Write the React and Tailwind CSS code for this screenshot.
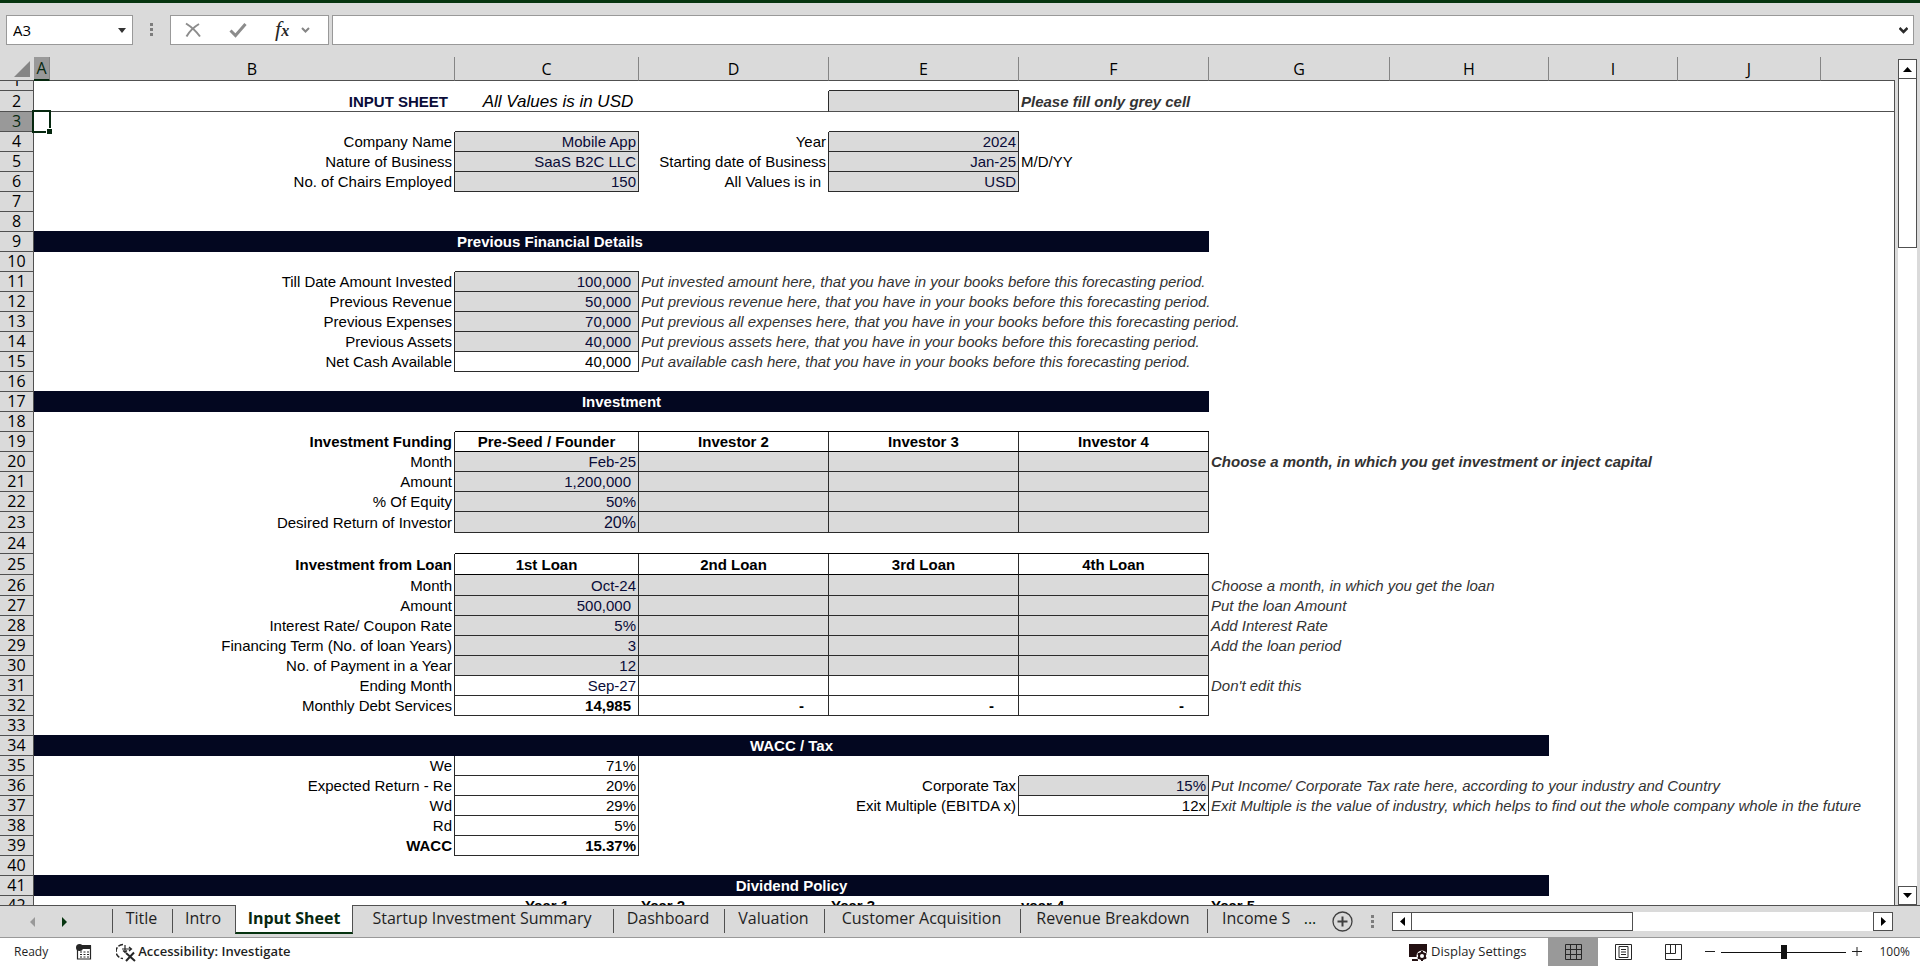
import React, { useState } from 'react'
import clsx from 'clsx'

const COLS = ['A', 'B', 'C', 'D', 'E', 'F', 'G', 'H', 'I', 'J', '']

// I = input cell (grey), O = output cell (white), H = table heading; all three are boxed
const ROWS = [
  { n: 1, short: true },
  {
    n: 2,
    tall: true,
    B: { t: 'INPUT SHEET', k: 'label', bold: true, indent: true, navy: true },
    C: { t: 'All Values is in USD', k: 'center', italic: true, title: true },
    E: { k: 'I' },
    F: { t: 'Please fill only grey cell', k: 'note', bold: true },
  },
  { n: 3 },
  { n: 4, B: { t: 'Company Name' }, C: { t: 'Mobile App', k: 'I' }, D: { t: 'Year' }, E: { t: '2024', k: 'I' } },
  {
    n: 5,
    B: { t: 'Nature of Business' },
    C: { t: 'SaaS B2C LLC', k: 'I' },
    D: { t: 'Starting date of Business' },
    E: { t: 'Jan-25', k: 'I' },
    F: { t: 'M/D/YY', k: 'left' },
  },
  {
    n: 6,
    B: { t: 'No. of Chairs Employed' },
    C: { t: '150', k: 'I' },
    D: { t: 'All Values is in', indent: true },
    E: { t: 'USD', k: 'I' },
  },
  { n: 7 },
  { n: 8 },
  { n: 9, band: 'Previous Financial Details', span: 6, bandLeft: true },
  { n: 10 },
  {
    n: 11,
    B: { t: 'Till Date Amount Invested' },
    C: { t: '100,000', k: 'I', indent: true },
    D: { t: 'Put invested amount here, that you have in your books before this forecasting period.', k: 'note' },
  },
  {
    n: 12,
    B: { t: 'Previous Revenue' },
    C: { t: '50,000', k: 'I', indent: true },
    D: { t: 'Put previous revenue here, that you have in your books before this forecasting period.', k: 'note' },
  },
  {
    n: 13,
    B: { t: 'Previous Expenses' },
    C: { t: '70,000', k: 'I', indent: true },
    D: { t: 'Put previous all expenses here, that you have in your books before this forecasting period.', k: 'note' },
  },
  {
    n: 14,
    B: { t: 'Previous Assets' },
    C: { t: '40,000', k: 'I', indent: true },
    D: { t: 'Put previous assets here, that you have in your books before this forecasting period.', k: 'note' },
  },
  {
    n: 15,
    B: { t: 'Net Cash Available' },
    C: { t: '40,000', k: 'O', indent: true },
    D: { t: 'Put available cash here, that you have in your books before this forecasting period.', k: 'note' },
  },
  { n: 16 },
  { n: 17, band: 'Investment', span: 6 },
  { n: 18 },
  {
    n: 19,
    B: { t: 'Investment Funding', bold: true },
    C: { t: 'Pre-Seed / Founder', k: 'H' },
    D: { t: 'Investor 2', k: 'H' },
    E: { t: 'Investor 3', k: 'H' },
    F: { t: 'Investor 4', k: 'H' },
  },
  {
    n: 20,
    B: { t: 'Month' },
    C: { t: 'Feb-25', k: 'I' },
    D: { k: 'I' },
    E: { k: 'I' },
    F: { k: 'I' },
    G: { t: 'Choose a month, in which you get investment or inject capital', k: 'note', bold: true },
  },
  { n: 21, B: { t: 'Amount' }, C: { t: '1,200,000', k: 'I', indent: true }, D: { k: 'I' }, E: { k: 'I' }, F: { k: 'I' } },
  { n: 22, B: { t: '% Of Equity' }, C: { t: '50%', k: 'I' }, D: { k: 'I' }, E: { k: 'I' }, F: { k: 'I' } },
  {
    n: 23,
    tall: true,
    B: { t: 'Desired Return of Investor' },
    C: { t: '20%', k: 'I', big: true },
    D: { k: 'I' },
    E: { k: 'I' },
    F: { k: 'I' },
  },
  { n: 24, tall: true },
  {
    n: 25,
    tall: true,
    B: { t: 'Investment from Loan', bold: true },
    C: { t: '1st Loan', k: 'H' },
    D: { t: '2nd Loan', k: 'H' },
    E: { t: '3rd Loan', k: 'H' },
    F: { t: '4th Loan', k: 'H' },
  },
  {
    n: 26,
    tall: true,
    B: { t: 'Month' },
    C: { t: 'Oct-24', k: 'I' },
    D: { k: 'I' },
    E: { k: 'I' },
    F: { k: 'I' },
    G: { t: 'Choose a month, in which you get the loan', k: 'note' },
  },
  {
    n: 27,
    B: { t: 'Amount' },
    C: { t: '500,000', k: 'I', indent: true },
    D: { k: 'I' },
    E: { k: 'I' },
    F: { k: 'I' },
    G: { t: 'Put the loan Amount', k: 'note' },
  },
  {
    n: 28,
    B: { t: 'Interest Rate/ Coupon Rate' },
    C: { t: '5%', k: 'I' },
    D: { k: 'I' },
    E: { k: 'I' },
    F: { k: 'I' },
    G: { t: 'Add Interest Rate', k: 'note' },
  },
  {
    n: 29,
    B: { t: 'Financing Term (No. of loan Years)' },
    C: { t: '3', k: 'I' },
    D: { k: 'I' },
    E: { k: 'I' },
    F: { k: 'I' },
    G: { t: 'Add the loan period', k: 'note' },
  },
  { n: 30, B: { t: 'No. of Payment in a Year' }, C: { t: '12', k: 'I' }, D: { k: 'I' }, E: { k: 'I' }, F: { k: 'I' } },
  {
    n: 31,
    B: { t: 'Ending Month' },
    C: { t: 'Sep-27', k: 'O', navy: true },
    D: { k: 'O' },
    E: { k: 'O' },
    F: { k: 'O' },
    G: { t: "Don't edit this", k: 'note' },
  },
  {
    n: 32,
    B: { t: 'Monthly Debt Services' },
    C: { t: '14,985', k: 'O', bold: true, indent: true },
    D: { t: '-', k: 'O', bold: true, dash: true },
    E: { t: '-', k: 'O', bold: true, dash: true },
    F: { t: '-', k: 'O', bold: true, dash: true },
  },
  { n: 33 },
  { n: 34, band: 'WACC / Tax', span: 8 },
  { n: 35, B: { t: 'We' }, C: { t: '71%', k: 'O' } },
  {
    n: 36,
    B: { t: 'Expected Return - Re' },
    C: { t: '20%', k: 'O' },
    E: { t: 'Corporate Tax' },
    F: { t: '15%', k: 'I' },
    G: { t: 'Put Income/ Corporate Tax rate here, according to your industry and Country', k: 'note' },
  },
  {
    n: 37,
    B: { t: 'Wd' },
    C: { t: '29%', k: 'O' },
    E: { t: 'Exit Multiple (EBITDA x)' },
    F: { t: '12x', k: 'O' },
    G: { t: 'Exit Multiple is the value of industry, which helps to find out the whole company whole in the future', k: 'note' },
  },
  { n: 38, B: { t: 'Rd' }, C: { t: '5%', k: 'O' } },
  { n: 39, B: { t: 'WACC', bold: true }, C: { t: '15.37%', k: 'O', bold: true } },
  { n: 40 },
  { n: 41, band: 'Dividend Policy', span: 8 },
  {
    n: 42,
    C: { t: 'Year 1', k: 'center', bold: true },
    D: { t: 'Year 2', k: 'left', bold: true },
    E: { t: 'Year 3', k: 'left', bold: true },
    F: { t: 'year 4', k: 'left', bold: true },
    G: { t: 'Year 5', k: 'left', bold: true },
  },
]

const TABS = [
  { name: 'Title', width: 'w-15' },
  { name: 'Intro', width: 'w-[63px]' },
  { name: 'Input Sheet', width: 'w-[118px]' },
  { name: 'Startup Investment Summary', width: 'w-[260px]' },
  { name: 'Dashboard', width: 'w-[111px]' },
  { name: 'Valuation', width: 'w-[100px]' },
  { name: 'Customer Acquisition', width: 'w-[196px]' },
  { name: 'Revenue Breakdown', width: 'w-[187px]' },
]

const isBox = (row, col) => Boolean(row && col && row[col] && ['I', 'O', 'H'].includes(row[col].k))
const inBand = (row, i) => Boolean(row && row.band && i < row.span)

const Cell = ({ row, next, i }) => {
  const col = COLS[i]
  const cell = row[col] || {}
  const { t, k = 'label' } = cell
  const last = i === COLS.length - 1
  const boxed = isBox(row, col)
  const rightAligned = k === 'label' || k === 'I' || k === 'O'

  // each cell draws only its right and bottom lines, so neighbours are looked up
  const right = last || boxed || isBox(row, COLS[i + 1])
  const bottom = boxed || isBox(next, col) || inBand(next, i) || row.n === 2
  const heading = k === 'H' || next?.[col]?.k === 'H'

  return (
    <td
      className={clsx(
        'p-0 align-bottom whitespace-nowrap',
        row.n === 3 && col === 'A' && 'relative',
        k === 'I' && 'bg-[#dadada]',
        right && 'border-r',
        right && (last ? 'border-r-[#505050]' : 'border-r-[#2b2b2b]'),
        bottom ? 'border-b' : 'pb-px',
        row.n === 2
          ? 'border-b-[#505050]'
          : inBand(next, i)
            ? 'border-b-[#030720]'
            : heading ? 'border-b-black' : 'border-b-[#2b2b2b]'
      )}
    >
      {t && (
        <div
          className={clsx(
            'h-[19px]',
            cell.title ? 'pl-[22px] text-[17px] leading-[19px]' : cell.big ? 'text-base leading-[19px]' : 'text-[15px] leading-[19px]',
            rightAligned && 'text-right',
            rightAligned && (cell.dash ? 'pr-6' : cell.indent ? 'pr-[7px]' : 'pr-0.5'),
            (k === 'H' || k === 'center') && 'text-center',
            (k === 'note' || k === 'left') && 'pl-0.5',
            (k === 'note' || cell.italic) && 'italic',
            (k === 'H' || cell.bold) && 'font-bold',
            k === 'note' ? 'text-[#333333]' : k === 'I' || cell.navy ? 'text-[#0a0c38]' : 'text-black'
          )}
        >
          {t}
        </div>
      )}
      {row.n === 3 && col === 'A' && (
        <div className="absolute -top-0.5 -left-0.5 w-[19px] h-[23px] border-2 border-[#06280f] pointer-events-none">
          <span className="absolute -right-[3px] -bottom-[3px] w-[6px] h-[6px] bg-[#06280f] border-t border-l border-white" />
        </div>
      )}
    </td>
  )
}

const Row = ({ row, next }) => {
  const start = row.band ? row.span : 0
  return (
    <tr className={row.short ? 'h-2.5' : row.tall ? 'h-[21px]' : 'h-5'}>
      <th
        scope="row"
        className={clsx(
          "border-r border-b border-[#505050] p-0 align-bottom font-normal font-['Open_Sans',sans-serif] text-base",
          row.n === 3 ? 'bg-[#999999] text-[#06280f]' : 'bg-[#dadada] text-black'
        )}
      >
        <div className={clsx('flex items-end justify-center leading-[19px]', row.short ? 'h-[9px] overflow-hidden' : 'h-[19px]')}>
          {row.n}
        </div>
      </th>
      {row.band && !row.bandLeft && (
        <td colSpan={row.span} className="bg-[#030720] p-0 pb-px align-bottom text-center text-[15px] leading-[19px] font-bold text-white">
          {row.band}
        </td>
      )}
      {row.bandLeft && (
        <>
          <td colSpan={2} className="bg-[#030720] p-0" />
          <td colSpan={4} className="bg-[#030720] p-0 pb-px pl-0.5 align-bottom text-[15px] leading-[19px] font-bold text-white">
            {row.band}
          </td>
        </>
      )}
      {COLS.map((col, i) => i >= start && <Cell key={i} row={row} next={next} i={i} />)}
    </tr>
  )
}

const Sheet = () => (
  <table className="w-full table-fixed border-separate border-spacing-0 font-['Liberation_Sans',Arial,sans-serif]">
    <colgroup>
      <col className="w-[34px]" />
      <col className="w-4" />
      <col className="w-[405px]" />
      <col className="w-[184px]" />
      <col className="w-[190px]" />
      <col className="w-[190px]" />
      <col className="w-[190px]" />
      <col className="w-[181px]" />
      <col className="w-[159px]" />
      <col className="w-[129px]" />
      <col className="w-[143px]" />
      <col />
    </colgroup>
    <thead>
      <tr className="h-6 font-['Open_Sans',sans-serif] text-base">
        <th className="p-0 border-b border-[#505050]">
          <button aria-label="Select all" className="flex w-full h-[23px] items-end justify-end pr-1 pb-[3px]">
            <svg width="16" height="16" viewBox="0 0 16 16">
              <path d="M16 0V16H0Z" fill="#858585" />
            </svg>
          </button>
        </th>
        {COLS.map((col, i) => (
          <th
            key={i}
            scope="col"
            className={clsx(
              'p-0 font-normal leading-[22px]',
              col === 'A' ? 'bg-[#999999] border-b-2 border-b-[#06280f] text-[#06280f]' : 'border-b border-b-[#505050]',
              col !== '' && 'border-r border-r-[#858585]'
            )}
          >
            {col}
          </th>
        ))}
      </tr>
    </thead>
    <tbody className="bg-white">
      {ROWS.map((row, i) => (
        <Row key={row.n} row={row} next={ROWS[i + 1]} />
      ))}
    </tbody>
  </table>
)

const Grip = () => (
  <svg width="4" height="14" viewBox="0 0 4 14" fill="#7d7d7d">
    <path d="M0 0H3V3H0ZM0 5H3V8H0ZM0 10H3V13H0Z" />
  </svg>
)

const FormulaBar = () => (
  <div className="flex h-[54px] items-start pt-3 pl-1.5 pr-1.5 font-['Open_Sans',sans-serif]">
    <div className="flex w-[127px] h-[30px] items-center bg-white border border-[#999999] pr-1.5">
      <input aria-label="Name box" defaultValue="A3" className="min-w-0 flex-1 pl-1.5 text-[15px] text-black outline-none" />
      <button aria-label="Open name list">
        <svg width="8" height="5" viewBox="0 0 8 5">
          <path d="M0 0H8L4 5Z" fill="#333" />
        </svg>
      </button>
    </div>
    <div className="flex w-[37px] h-[30px] items-center justify-center">
      <Grip />
    </div>
    <div className="flex w-[159px] h-[30px] items-center bg-white border border-[#999999] pl-[13px]">
      <button aria-label="Cancel">
        <svg width="18" height="16" viewBox="0 0 18 16" fill="none" stroke="#8c8c8c" strokeWidth="2">
          <path d="M2 1.500C6 4 12 9 16 14.500M15 2C10 5 5 10 2.500 14.500" />
        </svg>
      </button>
      <button aria-label="Enter" className="ml-[27px]">
        <svg width="18" height="16" viewBox="0 0 18 16" fill="none" stroke="#8c8c8c" strokeWidth="3">
          <path d="M1.500 8.500L6.500 13.500L16.500 2" />
        </svg>
      </button>
      <button aria-label="Insert function" className="ml-7 font-['Liberation_Serif',serif] italic text-[22px] leading-6 text-[#262626]">
        f<span className="text-base font-bold">x</span>
      </button>
      <button aria-label="More functions" className="ml-3">
        <svg width="9" height="6" viewBox="0 0 9 6" fill="none" stroke="#858585" strokeWidth="2">
          <path d="M1 1L4.500 4.500L8 1" />
        </svg>
      </button>
    </div>
    <div className="ml-[3px] flex flex-1 h-[30px] items-center bg-white border border-[#999999] pr-[5px]">
      <input aria-label="Formula bar" className="min-w-0 flex-1 h-full px-2 text-sm outline-none" />
      <button aria-label="Expand formula bar">
        <svg width="9" height="7" viewBox="0 0 9 7" fill="none" stroke="#2b2b2b" strokeWidth="2.500">
          <path d="M0.500 1L4.500 5L8.500 1" />
        </svg>
      </button>
    </div>
  </div>
)

const VerticalScroll = () => (
  <div className="flex w-[25px] shrink-0 flex-col pt-0.5 pl-[3px] pr-[3px]">
    <button aria-label="Scroll up" className="flex h-5 shrink-0 items-center justify-center bg-white border border-[#505050]">
      <svg width="9" height="5" viewBox="0 0 9 5"><path d="M4.500 0L9 5H0Z" /></svg>
    </button>
    <div className="flex-1 bg-white">
      <div className="-mt-px h-[170px] bg-white border border-[#505050]" />
    </div>
    <button aria-label="Scroll down" className="flex h-[19px] shrink-0 items-center justify-center bg-white border border-[#505050]">
      <svg width="9" height="5" viewBox="0 0 9 5"><path d="M0 0H9L4.500 5Z" /></svg>
    </button>
  </div>
)

const TabBar = () => {
  const [active, setActive] = useState('Input Sheet')
  return (
    <div className="flex h-[33px] shrink-0 border-t border-t-[#505050] border-b border-b-[#999999] pr-[27px] font-['Open_Sans',sans-serif] text-base">
      <div className="flex w-28 shrink-0 items-center pl-[30px] gap-[27px]">
        <button aria-label="Previous sheet">
          <svg width="5" height="10" viewBox="0 0 5 10"><path d="M5 0V10L0 5Z" fill="#999" /></svg>
        </button>
        <button aria-label="Next sheet">
          <svg width="5" height="10" viewBox="0 0 5 10"><path d="M0 0V10L5 5Z" fill="#06340f" /></svg>
        </button>
      </div>
      <div className="flex shrink-0 items-start" role="tablist">
        {TABS.map(({ name, width }, i) => {
          const selected = name === active
          const afterSelected = i > 0 && TABS[i - 1].name === active
          return (
            <button
              key={name}
              role="tab"
              aria-selected={selected}
              onClick={() => setActive(name)}
              className={clsx(
                'flex shrink-0 items-start justify-center whitespace-nowrap',
                width,
                selected
                  ? '-mt-px h-[29px] bg-white border-x border-x-[#505050] border-b-2 border-b-[#06340f] font-bold text-[#06280f] leading-[26px]'
                  : 'mt-[3px] h-6 pr-0.5 leading-[18px] text-[#1f1f1f]',
                !selected && !afterSelected && 'border-l border-l-[#505050]'
              )}
            >
              {name}
            </button>
          )
        })}
        <button role="tab" aria-selected={false} className="flex mt-[3px] h-6 w-[89px] items-start border-l border-l-[#505050] pl-3.5 leading-[18px] whitespace-nowrap text-[#1f1f1f]">
          Income S
        </button>
      </div>
      <button aria-label="More sheets" className="w-7 pb-2 text-[#06280f]">...</button>
      <button aria-label="New sheet" className="ml-2">
        <svg width="21" height="21" viewBox="0 0 21 21" fill="none" stroke="#404040">
          <circle cx="10.500" cy="10.500" r="9.500" strokeWidth="1.300" />
          <path d="M10.500 5.500V15.500M5.500 10.500H15.500" strokeWidth="2" />
        </svg>
      </button>
      <div className="flex w-[39px] shrink-0 items-center justify-center">
        <Grip />
      </div>
      <div className="mt-1.5 flex h-[19px] flex-1 bg-white">
        <button aria-label="Scroll left" className="flex w-5 items-center justify-center bg-white border border-[#505050]">
          <svg width="5" height="9" viewBox="0 0 5 9"><path d="M5 0V9L0 4.500Z" /></svg>
        </button>
        <div className="flex-1">
          <div className="-ml-px h-full w-[222px] bg-white border border-[#505050]" />
        </div>
        <button aria-label="Scroll right" className="flex w-5 items-center justify-center bg-white border border-[#505050]">
          <svg width="5" height="9" viewBox="0 0 5 9"><path d="M0 0V9L5 4.500Z" /></svg>
        </button>
      </div>
    </div>
  )
}

const StatusBar = () => (
  <div className="flex h-7 shrink-0 items-center bg-white pl-3.5 pr-2.5 font-['Open_Sans',sans-serif] text-xs text-[#1f1f1f]">
    <span>Ready</span>
    <button aria-label="Record macro" className="ml-7">
      <svg width="16" height="16" viewBox="0 0 16 16">
        <path d="M1.500 4V15H14.500V2H5" fill="none" stroke="#262626" strokeWidth="1.200" />
        <rect x="5" y="1" width="10" height="4" fill="#262626" />
        <circle cx="3.500" cy="3.500" r="3.500" fill="#262626" />
        <path d="M4 8H6M7.500 8H9.500M11 8H13M4 10.500H6M7.500 10.500H9.500M11 10.500H13M4 13H6M7.500 13H9.500M11 13H13" stroke="#262626" />
      </svg>
    </button>
    <button className="ml-6 flex items-center gap-0.5 text-[13px] font-semibold">
      <svg width="20" height="19" viewBox="0 0 20 19" fill="none" stroke="#262626" strokeWidth="1.500">
        <path d="M7 1.500A7 7 0 0 0 7 15.500" strokeDasharray="5 1.500" />
        <path d="M6 6H15M13 4L15.500 6L13 8M9 2V9M7 7.500L9 9.500L11 7.500" strokeWidth="1.200" />
        <path d="M10 10L19 18M18 9.500L10 18" strokeWidth="2" />
      </svg>
      Accessibility: Investigate
    </button>
    <div className="flex-1" />
    <button className="flex items-center gap-0.5 text-[13px]">
      <svg width="20" height="19" viewBox="0 0 20 19">
        <path d="M0 1H18V14H0Z" fill="#231012" />
        <path d="M3 17H9" stroke="#231012" strokeWidth="2" />
        <circle cx="13" cy="13" r="5.500" fill="#fff" />
        <circle cx="13" cy="13" r="3" fill="none" stroke="#231012" strokeWidth="2" />
        <path d="M13 8V10M13 16V18M8.700 10.500L10.400 11.500M15.600 14.500L17.300 15.500M8.700 15.500L10.400 14.500M15.600 11.500L17.300 10.500" stroke="#231012" strokeWidth="2" />
      </svg>
      Display Settings
    </button>
    <div className="ml-[22px] flex h-full">
      <button aria-label="Normal view" className="flex h-full w-[50px] items-center justify-center bg-[#999999]">
        <svg width="17" height="16" viewBox="0 0 17 16" fill="none" stroke="#262626">
          <path d="M0.500 0.500H16.500V15.500H0.500ZM5.500 0.500V15.500M11.500 0.500V15.500M0.500 5.500H16.500M0.500 10.500H16.500" />
        </svg>
      </button>
      <button aria-label="Page layout view" className="flex h-full w-[50px] items-center justify-center">
        <svg width="17" height="16" viewBox="0 0 17 16" fill="none" stroke="#262626">
          <path d="M0.500 0.500H16.500V15.500H0.500ZM4 2.500H13V13.500H4ZM6 5.500H11M6 8H11M6 10.500H11" />
        </svg>
      </button>
      <button aria-label="Page break preview" className="flex h-full w-[50px] items-center justify-center">
        <svg width="17" height="16" viewBox="0 0 17 16" fill="none" stroke="#262626">
          <path d="M0.500 0.500H16.500V15.500H0.500ZM0.500 9.500H10.500V0.500M5.500 0.500V9.500" />
        </svg>
      </button>
    </div>
    <button aria-label="Zoom out" className="ml-[7px]">
      <svg width="10" height="10" viewBox="0 0 10 10"><path d="M0 4.500H10" stroke="#1f1f1f" /></svg>
    </button>
    <input
      type="range"
      aria-label="Zoom"
      min="10"
      max="190"
      defaultValue="100"
      className="ml-1.5 h-4 w-[125px] appearance-none bg-[linear-gradient(#111,#111)] bg-[length:100%_1px] bg-center bg-no-repeat [&::-webkit-slider-thumb]:appearance-none [&::-webkit-slider-thumb]:h-3.5 [&::-webkit-slider-thumb]:w-1.5 [&::-webkit-slider-thumb]:bg-[#111111]"
    />
    <button aria-label="Zoom in" className="ml-1.5">
      <svg width="10" height="10" viewBox="0 0 10 10"><path d="M0 4.500H10M5 0V9" stroke="#1f1f1f" /></svg>
    </button>
    <button className="ml-[17px]">100%</button>
  </div>
)

export default function App() {
  return (
    <div className="flex h-screen flex-col overflow-hidden bg-[#dadada]">
      <div className="h-[3px] shrink-0 bg-[#06340f]" />
      <FormulaBar />
      <div className="flex min-h-0 flex-1">
        <div className="min-w-0 flex-1 overflow-hidden">
          <Sheet />
        </div>
        <VerticalScroll />
      </div>
      <TabBar />
      <StatusBar />
    </div>
  )
}
